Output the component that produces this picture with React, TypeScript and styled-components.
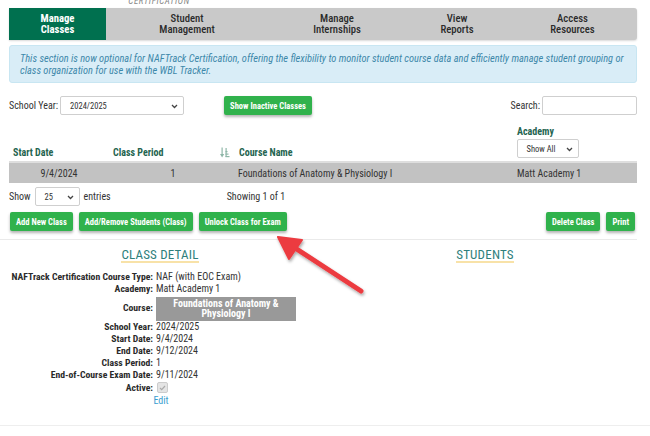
import React from "react";
import styled, { createGlobalStyle } from "styled-components";

const GlobalStyle = createGlobalStyle`
  html, body {
    margin: 0;
    padding: 0;
    background: #fff;
  }
  body {
    font-family: "Roboto Condensed", Roboto, "Liberation Sans", sans-serif;
    color: #333;
    font-size: 10px;
  }
`;

const Page = styled.div`
  position: relative;
  width: 650px;
  height: 436px;
  overflow: hidden;
`;

const Inner = styled.div`
  padding: 0 13px 0 9px;
`;

const Crumb = styled.div`
  height: 7px;
  line-height: 0;
  text-align: center;
  width: 300px;
  font-size: 9px;
  font-style: italic;
  letter-spacing: 0.6px;
  color: #888;
  padding-top: 1px;
`;

const Nav = styled.nav`
  display: grid;
  grid-template-columns: 97px 162px 138px 102px 1fr;
  height: 32px;
  background: #c9c9c9;
  border-radius: 0 3px 3px 0;
  box-shadow: 0 1px 2px rgba(0, 0, 0, 0.15);
`;

const Tab = styled.div<{ $active?: boolean }>`
  display: flex;
  flex-direction: column;
  align-items: center;
  justify-content: center;
  text-align: center;
  font-size: 10.7px;
  line-height: 11px;
  font-weight: ${(p) => (p.$active ? 700 : 500)};
  color: ${(p) => (p.$active ? "#fff" : "#2b2b2b")};
  background: ${(p) => (p.$active ? "#00704f" : "transparent")};
`;

const Notice = styled.div`
  margin-top: 5px;
  height: 38px;
  box-sizing: border-box;
  padding: 7px 9px 0 10px;
  background: #d9edf7;
  border: 1px solid #c8e6f2;
  border-radius: 3px;
  color: #3d88aa;
  font-style: italic;
  font-size: 10.4px;
  line-height: 12px;
`;

const Toolbar = styled.div`
  display: flex;
  align-items: center;
  margin-top: 13px;
  height: 19px;
`;

const Label = styled.span<{ $gap?: number }>`
  font-size: 10px;
  color: #333;
  margin-left: ${(p) => p.$gap ?? 0}px;
`;

const SelectBox = styled.div<{ $w: number; $center?: boolean }>`
  position: relative;
  width: ${(p) => p.$w}px;
  height: 19px;
  box-sizing: border-box;
  border: 1px solid #cfcfcf;
  border-radius: 2px;
  background: #fff;
  display: flex;
  align-items: center;
  justify-content: ${(p) => (p.$center ? "center" : "flex-start")};
  padding: 0 14px 0 ${(p) => (p.$center ? 0 : 9)}px;
  font-size: 8.5px;
  font-weight: 400;
  color: #333;
  svg {
    position: absolute;
    right: 5px;
    top: 7px;
  }
`;

const GreenButton = styled.button<{ $ml?: number }>`
  height: 19px;
  border: none;
  border-radius: 2px;
  padding: 0 6px;
  margin-left: ${(p) => p.$ml ?? 0}px;
  background: #30b24c;
  color: #fff;
  font-family: inherit;
  font-size: 8.5px;
  font-weight: 700;
  box-shadow: 0 2px 3px rgba(0, 0, 0, 0.3);
  cursor: pointer;
  white-space: nowrap;
`;

const Spacer = styled.div`
  flex: 1;
`;

const SearchInput = styled.div`
  width: 95px;
  height: 19px;
  box-sizing: border-box;
  border: 1px solid #cfcfcf;
  border-radius: 2px;
  margin-left: 2px;
`;

const Table = styled.div`
  margin-top: 11px;
`;

const Row = styled.div<{ $head?: boolean }>`
  display: grid;
  grid-template-columns: 100px 106px 298px 124px;
  align-items: ${(p) => (p.$head ? "end" : "center")};
  height: ${(p) => (p.$head ? "37px" : "20px")};
  background: ${(p) => (p.$head ? "transparent" : "#c2c2c2")};
  border-bottom: ${(p) => (p.$head ? "2px solid #dedede" : "none")};
  box-sizing: border-box;
`;

const HeadCell = styled.div`
  display: flex;
  flex-direction: column;
  align-items: flex-start;
  gap: 2px;
  padding: 0 0 6px 4px;
  font-size: 10px;
  font-weight: 700;
  color: #24644f;
`;

const CourseHead = styled(HeadCell)`
  flex-direction: row;
  align-items: center;
  gap: 9px;
  padding-left: 5px;
`;

const Cell = styled.div<{ $align?: string; $pad?: number }>`
  font-size: 10px;
  color: #333;
  text-align: ${(p) => p.$align || "left"};
  padding-left: ${(p) => p.$pad ?? 0}px;
  white-space: nowrap;
`;

const EntriesRow = styled.div`
  display: flex;
  align-items: center;
  margin-top: 4px;
  height: 19px;
  gap: 4px;
`;

const ButtonRow = styled.div`
  display: flex;
  gap: 6px;
  margin-top: 6px;
  padding-left: 1px;
  padding-right: 2px;
`;

const Divider = styled.div`
  height: 1px;
  background: #eaeaea;
  margin: 8px 13px 0 0;
`;

const Columns = styled.div`
  display: grid;
  grid-template-columns: 320px 1fr;
`;

const Heading = styled.div`
  display: flex;
  justify-content: center;
  margin-top: 9px;
  span {
    font-size: 13px;
    color: #2f7f7c;
    line-height: 12px;
    letter-spacing: 0.2px;
    border-bottom: 2px solid #f8e2a8;
  }
`;

const Details = styled.div`
  display: grid;
  grid-template-columns: 153px 1fr;
  column-gap: 3px;
  margin-top: 8px;
  font-size: 10px;
  line-height: 12px;
`;

const DLabel = styled.div`
  display: flex;
  justify-content: flex-end;
  white-space: nowrap;
  font-size: 9.7px;
  font-weight: 700;
  color: #2a2a2a;
  align-self: center;
`;

const DValue = styled.div`
  color: #333;
  white-space: nowrap;
`;

const CourseBox = styled.div`
  width: 140px;
  height: 24px;
  margin-top: 2px;
  background: #999;
  color: #fff;
  font-weight: 700;
  font-size: 10px;
  line-height: 10px;
  text-align: center;
  display: flex;
  align-items: center;
  justify-content: center;
`;

const Check = styled.div`
  width: 9px;
  height: 9px;
  margin: 1px 0 1px 1px;
  border: 1px solid #ccc;
  border-radius: 2px;
  background: #e4e4e4;
  display: flex;
  align-items: center;
  justify-content: center;
`;

const EditLink = styled.a`
  grid-column: 1 / span 2;
  text-align: center;
  color: #3a9ed0;
  font-size: 10px;
  margin-top: 1px;
  padding-left: 2px;
`;

const BottomRule = styled.div`
  position: absolute;
  left: 0;
  right: 0;
  top: 425px;
  height: 1px;
  background: #eee;
`;

const ArrowLayer = styled.svg`
  position: absolute;
  left: 0;
  top: 0;
  pointer-events: none;
`;

const Chevron = () => (
  <svg width="7" height="5" viewBox="0 0 7 5">
    <path d="M1 1l2.5 2.5L6 1" fill="none" stroke="#444" strokeWidth="1.3" />
  </svg>
);

const SortIcon = () => (
  <svg width="10" height="11" viewBox="0 0 10 11">
    <g fill="#8fb7a8">
      <rect x="1.5" y="0.5" width="1.2" height="8" />
      <path d="M0 7h4.2L2.1 10.5z" />
      <rect x="5.5" y="1" width="1.2" height="9" />
      <rect x="5.5" y="9" width="4" height="1.2" />
      <rect x="5.5" y="6.5" width="3" height="1.2" />
      <rect x="5.5" y="4" width="2" height="1.2" />
    </g>
  </svg>
);

const tabs = [
  { label: ["Manage", "Classes"], active: true },
  { label: ["Student", "Management"] },
  { label: ["Manage", "Internships"] },
  { label: ["View", "Reports"] },
  { label: ["Access", "Resources"] },
];

const details: [string, string][] = [
  ["NAFTrack Certification Course Type:", "NAF (with EOC Exam)"],
  ["Academy:", "Matt Academy 1"],
];

const details2: [string, string][] = [
  ["School Year:", "2024/2025"],
  ["Start Date:", "9/4/2024"],
  ["End Date:", "9/12/2024"],
  ["Class Period:", "1"],
  ["End-of-Course Exam Date:", "9/11/2024"],
];

export default function App() {
  return (
    <Page>
      <GlobalStyle />
      <Inner>
        <Crumb>CERTIFICATION</Crumb>
        <Nav>
          {tabs.map((t) => (
            <Tab key={t.label.join(" ")} $active={t.active}>
              <span>{t.label[0]}</span>
              <span>{t.label[1]}</span>
            </Tab>
          ))}
        </Nav>
        <Notice>
          This section is now optional for NAFTrack Certification, offering the flexibility to monitor student course data and efficiently manage student grouping or
          class organization for use with the WBL Tracker.
        </Notice>

        <Toolbar>
          <Label>School Year:</Label>
          <SelectBox $w={124} style={{ marginLeft: 2 }}>
            2024/2025
            <Chevron />
          </SelectBox>
          <GreenButton $ml={40}>Show Inactive Classes</GreenButton>
          <Spacer />
          <Label>Search:</Label>
          <SearchInput />
        </Toolbar>

        <Table>
          <Row $head>
            <HeadCell>Start Date</HeadCell>
            <HeadCell>Class Period</HeadCell>
            <CourseHead>
              <SortIcon />
              Course Name
            </CourseHead>
            <HeadCell>
              <span>Academy</span>
              <SelectBox $w={62} $center>
                Show All
                <Chevron />
              </SelectBox>
            </HeadCell>
          </Row>
          <Row>
            <Cell $align="center">9/4/2024</Cell>
            <Cell $align="center" $pad={22}>1</Cell>
            <Cell $pad={23}>Foundations of Anatomy &amp; Physiology I</Cell>
            <Cell $pad={4}>Matt Academy 1</Cell>
          </Row>
        </Table>

        <EntriesRow>
          <Label>Show</Label>
          <SelectBox $w={45}>
            25
            <Chevron />
          </SelectBox>
          <Label>entries</Label>
          <Label $gap={112}>Showing 1 of 1</Label>
        </EntriesRow>

        <ButtonRow>
          <GreenButton>Add New Class</GreenButton>
          <GreenButton>Add/Remove Students (Class)</GreenButton>
          <GreenButton>Unlock Class for Exam</GreenButton>
          <Spacer />
          <GreenButton>Delete Class</GreenButton>
          <GreenButton>Print</GreenButton>
        </ButtonRow>
      </Inner>
      <Divider />

      <Columns>
        <div>
          <Heading>
            <span>CLASS DETAIL</span>
          </Heading>
          <Details>
            {details.map(([l, v]) => (
              <React.Fragment key={l}>
                <DLabel>{l}</DLabel>
                <DValue>{v}</DValue>
              </React.Fragment>
            ))}
            <DLabel>Course:</DLabel>
            <CourseBox>
              Foundations of Anatomy &amp;
              <br />
              Physiology I
            </CourseBox>
            {details2.map(([l, v]) => (
              <React.Fragment key={l}>
                <DLabel>{l}</DLabel>
                <DValue>{v}</DValue>
              </React.Fragment>
            ))}
            <DLabel>Active:</DLabel>
            <DValue>
              <Check>
                <svg width="7" height="6" viewBox="0 0 7 6">
                  <path d="M1 3l1.7 1.7L6 1" fill="none" stroke="#aaa" strokeWidth="1.2" />
                </svg>
              </Check>
            </DValue>
            <EditLink>Edit</EditLink>
          </Details>
        </div>
        <div>
          <Heading>
            <span>STUDENTS</span>
          </Heading>
        </div>
      </Columns>

      <BottomRule />

      <ArrowLayer width="650" height="436">
        <defs>
          <filter id="sh" x="-20%" y="-20%" width="140%" height="140%">
            <feDropShadow dx="1" dy="2" stdDeviation="1.5" floodColor="#000" floodOpacity="0.35" />
          </filter>
        </defs>
        <g filter="url(#sh)" fill="#ec3b40" stroke="#ec3b40" strokeLinecap="round" strokeLinejoin="round">
          <line x1="361" y1="291" x2="292" y2="246" strokeWidth="5" />
          <path d="M278 237 L302 240 L289 259 Z" strokeWidth="2" />
        </g>
      </ArrowLayer>
    </Page>
  );
}
